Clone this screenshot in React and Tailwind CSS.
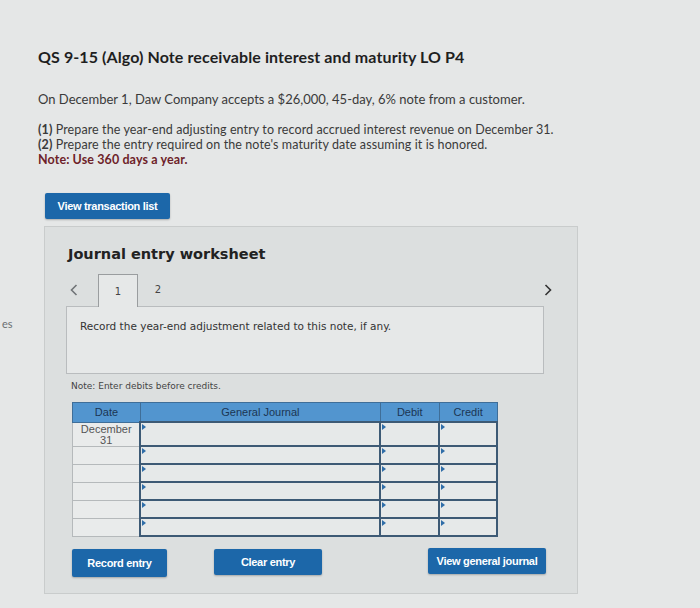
import React from "react";

const rows = [
  { date: "December 31", tall: true },
  { date: "" },
  { date: "" },
  { date: "" },
  { date: "" },
  { date: "" },
];

function Marker() {
  return (
    <span className="absolute left-[1px] top-[1px] w-0 h-0 border-t-[3px] border-b-[3px] border-l-[4px] border-t-transparent border-b-transparent border-l-[#2f6da8]" />
  );
}

function BlueButton({ children, className = "" }) {
  return (
    <button
      className={`bg-[#1c67a9] text-white font-bold text-[11px] tracking-[-0.3px] rounded-[2px] shadow-[0_1px_2px_rgba(0,0,0,0.25)] ${className}`}
      style={{ fontFamily: '"Liberation Sans", Arial, sans-serif' }}
    >
      {children}
    </button>
  );
}

function Chevron({ dir, className = "" }) {
  return (
    <svg width="8" height="12" viewBox="0 0 8 12" className={className}>
      <path
        d={dir === "left" ? "M6.5 1 L1.5 6 L6.5 11" : "M1.5 1 L6.5 6 L1.5 11"}
        fill="none"
        stroke="currentColor"
        strokeWidth="1.6"
      />
    </svg>
  );
}

export default function App() {
  return (
    <div
      className="relative w-[700px] h-[608px] overflow-hidden bg-[#e5e7e7] text-[#2b2b2b]"
      style={{ fontFamily: "Lato, 'Open Sans', sans-serif" }}
    >
      {/* sidebar edge */}
      <span className="absolute left-[2px] top-[316px] text-[11px] text-[#6b6f72]">es</span>

      <div className="pl-[38px] pt-[47px]">
        <h1 className="text-[16px] tracking-[0.1px] font-bold text-[#1f1f1f] leading-[19px]">
          QS 9-15 (Algo) Note receivable interest and maturity LO P4
        </h1>

        <p className="mt-[26px] text-[13px] leading-[15px] text-[#3a3a3a]">
          On December 1, Daw Company accepts a $26,000, 45-day, 6% note from a customer.
        </p>

        <div className="mt-[15px] text-[12.5px] tracking-[0.1px] leading-[15px] text-[#3a3a3a]">
          <p>
            <span className="font-bold">(1)</span> Prepare the year-end adjusting entry to record accrued interest revenue on December 31.
          </p>
          <p>
            <span className="font-bold">(2)</span> Prepare the entry required on the note's maturity date assuming it is honored.
          </p>
          <p className="font-bold text-[#6e1f2a]">Note: Use 360 days a year.</p>
        </div>

        <BlueButton className="mt-[26px] ml-[7px] w-[125px] h-[26px]">View transaction list</BlueButton>

        {/* worksheet panel */}
        <div className="mt-[7px] ml-[6px] w-[534px] h-[368px] bg-[#dcdfdf] border border-[#c9cccc] pl-[21px] pt-[17px]">
          <h2
            className="ml-[2px] text-[14.5px] font-bold text-[#222] leading-[20px]"
            style={{ fontFamily: '"DejaVu Sans", Verdana, sans-serif' }}
          >
            Journal entry worksheet
          </h2>

          <div
            className="mt-[9px] w-[486px] flex items-end h-[33px] relative"
            style={{ fontFamily: '"DejaVu Sans", Verdana, sans-serif' }}
          >
            <span className="w-[32px] pl-[4px] self-center text-[#707477]">
              <Chevron dir="left" />
            </span>
            <div className="w-[40px] h-[33px] border border-b-0 border-[#9a9d9f] bg-[#e6e8e8] flex items-center justify-center text-[10px] text-[#444] relative z-10 -mb-[1px]">
              1
            </div>
            <div className="w-[40px] h-[33px] flex items-center justify-center text-[10px] text-[#444]">2</div>
            <span className="ml-auto self-center text-[#333]">
              <Chevron dir="right" />
            </span>
          </div>

          <div
            className="w-[478px] h-[68px] bg-[#e6e8e8] border border-[#b9bcbe] pl-[13px] pt-[12px] text-[10.5px] text-[#333]"
            style={{ fontFamily: '"DejaVu Sans", Verdana, sans-serif' }}
          >
            Record the year-end adjustment related to this note, if any.
          </div>

          <p
            className="mt-[6px] ml-[5px] text-[9px] text-[#444]"
            style={{ fontFamily: '"DejaVu Sans", Verdana, sans-serif' }}
          >
            Note: Enter debits before credits.
          </p>

          <table
            className="mt-[8px] ml-[6px] w-[426px] border-collapse text-[11px]"
            style={{ fontFamily: '"Liberation Sans", Arial, sans-serif' }}
          >
            <thead>
              <tr className="h-[20px] bg-[#5295cf] text-[#1c3553]">
                <th className="w-[68px] font-normal border border-[#3f6e98]">Date</th>
                <th className="w-[241px] font-normal border border-[#3f6e98]">General Journal</th>
                <th className="w-[59px] font-normal border border-[#3f6e98]">Debit</th>
                <th className="w-[58px] font-normal border border-[#3f6e98]">Credit</th>
              </tr>
            </thead>
            <tbody>
              {rows.map((r, i) => (
                <tr key={i} className={r.tall ? "h-[24px]" : "h-[18px]"}>
                  <td className="border border-[#b5b9bb] bg-[#e9ebeb] text-center text-[#555] leading-[11px] align-top pt-[1px]">
                    {r.tall ? (
                      <>
                        December
                        <br />
                        31
                      </>
                    ) : null}
                  </td>
                  <td className="relative border-2 border-[#3d5a75] bg-[#e6e9e9]">
                    <Marker />
                  </td>
                  <td className="relative border-2 border-[#3d5a75] bg-[#e6e9e9]">
                    <Marker />
                  </td>
                  <td className="relative border-2 border-[#3d5a75] bg-[#e6e9e9]">
                    <Marker />
                  </td>
                </tr>
              ))}
            </tbody>
          </table>

          <div className="mt-[12px] ml-[6px] flex items-start">
            <BlueButton className="w-[95px] h-[28px]">Record entry</BlueButton>
            <BlueButton className="ml-[47px] w-[108px] h-[26px]">Clear entry</BlueButton>
            <BlueButton className="ml-[106px] w-[118px] h-[26px] -mt-[1px]">View general journal</BlueButton>
          </div>
        </div>
      </div>
    </div>
  );
}
